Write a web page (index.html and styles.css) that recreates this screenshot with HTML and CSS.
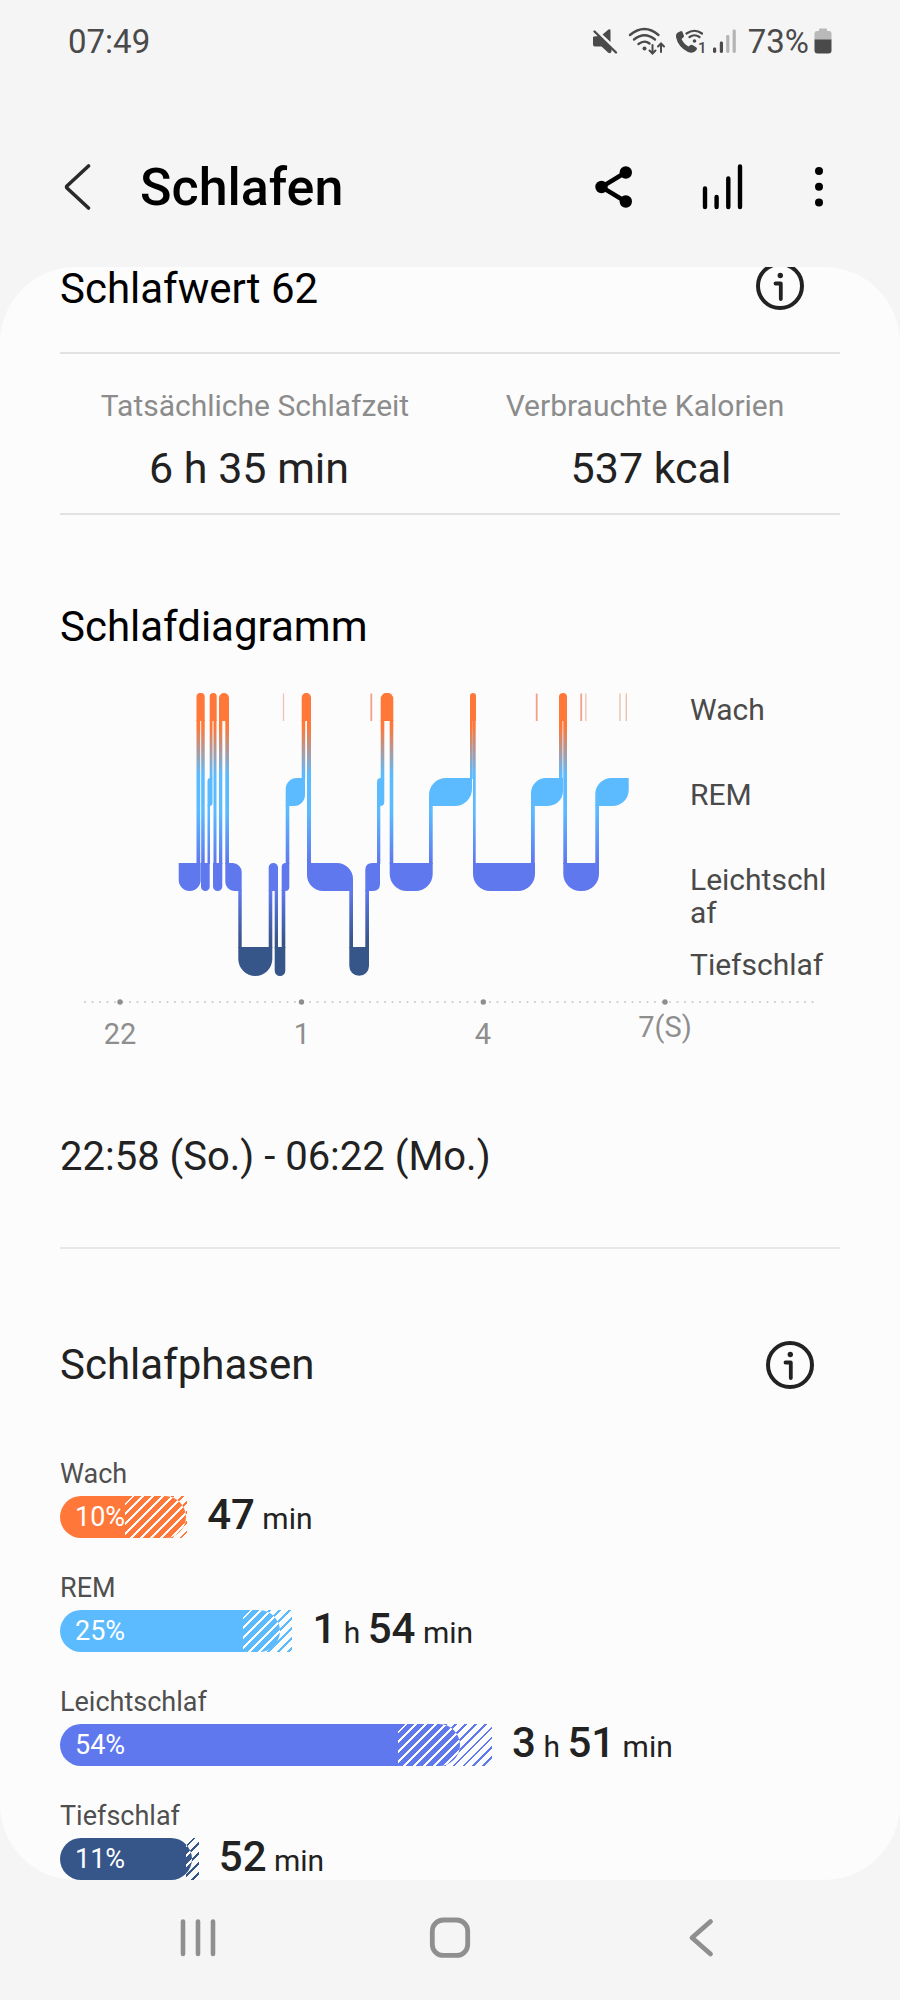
FILE: index.html
```html
<!DOCTYPE html>
<html lang="de">
<head>
<meta charset="utf-8">
<meta name="viewport" content="width=device-width, initial-scale=1">
<title>Schlafen</title>
<link rel="stylesheet" href="styles.css">
</head>
<body>
<div class="status">
  <span class="status-time">07:49</span>
  <div class="status-right">
    <svg class="status-icons" viewBox="590 21 150 40" aria-hidden="true">
      <g fill="#4a4a4a">
        <path d="M594 37.500Q594 36.500 595 36.500L600 36L612.500 48.500V51.500Q611.500 54.500 609 52.500L602.500 46.500H596Q594 46.500 594 44.500ZM603.500 34.500L609.500 29.500Q611.500 28.500 611.500 30.500V42Z"/>
        <circle cx="645.500" cy="48.500" r="2"/>
        <circle cx="695.500" cy="41" r="1.800"/>
        <path d="M678 33L682 31Q683 31 683.500 32L685 36Q685 37 684 37.800L682.500 39Q684.500 43.500 689.500 46.500L691.500 45Q692.500 44.500 693.500 45L697.500 47.500Q698.500 48.500 697.500 50Q694.500 54 689 52Q679 47 677 37Q676.800 34.500 678 33Z"/>
        <rect x="714" y="47.500" width="3.200" height="5.500" rx="1.400"/>
        <rect x="720.800" y="41.500" width="3.200" height="11.500" rx="1.400"/>
      </g>
      <g fill="#b4b4b4">
        <rect x="727.200" y="35" width="3.200" height="18" rx="1.400"/>
        <rect x="733.600" y="29.500" width="3.200" height="23.500" rx="1.400"/>
      </g>
      <g fill="none" stroke="#4a4a4a" stroke-width="2.400" stroke-linecap="round">
        <path d="M595.500 31.500L617 52.500"/>
        <path d="M631 35Q645.500 23 659.500 35M635 39.500Q645.500 31 656 39.500M639.500 44Q645.500 39.500 650.500 43.500"/>
        <path d="M653.500 45V53M650.500 50.500L653.500 53.500L656.500 50.500M662 52V44M659 46.500L662 43.500L665 46.500" stroke-width="2"/>
        <path d="M687.500 33.500Q695.500 28 703 33.500M690.500 37Q695.500 33.500 700.500 37" stroke-width="2.200"/>
      </g>
      <text class="sim" x="699" y="52.500">1</text>
    </svg>
    <span class="status-battery">73%</span>
    <svg class="battery" viewBox="0 0 18 26" aria-hidden="true">
      <path d="M5 1.500Q5 .5 6 .5H12Q13 .5 13 1.500V3H15Q17.500 3 17.500 5.500V12H.5V5.500Q.5 3 3 3H5Z" fill="#b9b9b9"/>
      <path d="M.5 11.500H17.500V22.500Q17.500 25.500 14.500 25.500H3.500Q.5 25.500 .5 22.500Z" fill="#4a4a4a"/>
    </svg>
  </div>
</div>

<header class="appbar">
  <button class="icon-button back" aria-label="Zurück">
    <svg viewBox="0 0 48 48" class="icon"><path d="M28.500 2L7.500 21.500Q5.500 23 7.500 24.500L28.500 44" fill="none" stroke="#2a2a2a" stroke-width="3.600" stroke-linecap="round" stroke-linejoin="round"/></svg>
  </button>
  <h1 class="title">Schlafen</h1>
  <button class="icon-button" aria-label="Teilen">
    <svg viewBox="0 0 61 48" class="icon icon-share"><path d="M35.500 8.500L11.500 23L35.500 37.500" fill="none" stroke="#000" stroke-width="4.400"/><circle cx="11.500" cy="23" r="6.200"/><circle cx="35.800" cy="8.500" r="6.200"/><circle cx="35.800" cy="37.500" r="6.200"/></svg>
  </button>
  <button class="icon-button" aria-label="Statistik">
    <svg viewBox="0 0 48 48" class="icon"><path d="M6 24.500V43M17.600 33V43M29.300 14.500V43M41 2.500V43" stroke="#000" stroke-width="4.400" stroke-linecap="round"/></svg>
  </button>
  <button class="icon-button" aria-label="Mehr Optionen">
    <svg viewBox="0 0 48 48" class="icon"><circle cx="24" cy="7" r="4"/><circle cx="24" cy="22.700" r="4"/><circle cx="24" cy="38.400" r="4"/></svg>
  </button>
</header>

<main class="card">
  <section>
    <div class="score-head">
      <h2 class="heading">Schlafwert 62</h2>
      <button class="icon-button" aria-label="Info zum Schlafwert">
        <svg viewBox="0 0 48 48" class="icon"><circle cx="24" cy="24" r="22" fill="none" stroke="#222" stroke-width="4"/><circle cx="24.300" cy="13.500" r="2.700" fill="#222"/><path d="M19.500 21.500H24.800V37" fill="none" stroke="#222" stroke-width="3.800" stroke-linecap="round" stroke-linejoin="round"/></svg>
      </button>
    </div>
    <div class="stats">
      <div class="stats-labels"><span>Tatsächliche Schlafzeit</span><span>Verbrauchte Kalorien</span></div>
      <div class="stats-values"><span>6 h 35 min</span><span>537 kcal</span></div>
    </div>
  </section>

  <section class="diagram">
    <h2 class="heading">Schlafdiagramm</h2>
    <div class="chart">
      <svg class="plot" viewBox="60 693 620 283" role="img" aria-label="Schlafphasen im Verlauf der Nacht">
        <defs>
          <linearGradient id="depth" gradientUnits="userSpaceOnUse" x1="0" y1="693" x2="0" y2="976">
            <stop offset="0" stop-color="#ff783a"/>
            <stop offset=".12" stop-color="#ff783a"/>
            <stop offset=".29" stop-color="#5cbbff"/>
            <stop offset=".42" stop-color="#5cbbff"/>
            <stop offset=".6" stop-color="#5f78ee"/>
            <stop offset=".7" stop-color="#5f78ee"/>
            <stop offset=".88" stop-color="#365589"/>
            <stop offset="1" stop-color="#365589"/>
          </linearGradient>
        </defs>
        <g fill="url(#depth)">
          <!-- Wach -->
          <path d="M196.500 721V697a4.100 4.100 0 0 1 8.200 0V721ZM209.700 721V696.500a3.500 3.500 0 0 1 7 0V721ZM219 721V698a5 5 0 0 1 10 0V721ZM301.700 721V697.500a4.650 4.650 0 0 1 9.300 0V721ZM380.700 721V699a6.300 6.300 0 0 1 12.600 0V721ZM470 721V696a3 3 0 0 1 6 0V721ZM559 721V697a4 4 0 0 1 8 0V721Z"/>
          <!-- REM -->
          <path d="M207.500 806V781q0-3 3-3H212.500V803q0 3-3 3ZM285.700 806V789a11 11 0 0 1 11-11H305V795a11 11 0 0 1-11 11ZM377 806V782q0-4 4-4H384.300V802q0 4-4 4ZM429 806V795a17 17 0 0 1 17-17H472V789a17 17 0 0 1-17 17ZM531 806V793a15 15 0 0 1 15-15H563V791a15 15 0 0 1-15 15ZM595.300 806V794a16 16 0 0 1 16-16H628.700V790a16 16 0 0 1-16 16Z"/>
          <!-- Leichtschlaf -->
          <path d="M178.700 863H200.700V880a11 11 0 0 1-22 0ZM201 863H209.700V886.700a4.350 4.350 0 0 1-8.700 0ZM213 863H222.300V886.400a4.650 4.650 0 0 1-9.300 0ZM225.300 863H232.700a9 9 0 0 1 9 9V891H234.300a9 9 0 0 1-9-9ZM268.700 891V867.600a4.650 4.650 0 0 1 9.300 0V891ZM281.700 891V867q0-4 4-4H289.300V887q0 4-4 4ZM307 863H337a16 16 0 0 1 16 16V891H323a16 16 0 0 1-16-16ZM365.300 891V870q0-7 7-7H380V884q0 7-7 7ZM389.700 863H432.700V874a17 17 0 0 1-17 17H406.700a17 17 0 0 1-17-17ZM473 863H535V874a17 17 0 0 1-17 17H490a17 17 0 0 1-17-17ZM563.300 863H599V874a17 17 0 0 1-17 17H580.300a17 17 0 0 1-17-17Z"/>
          <!-- Tiefschlaf -->
          <path d="M238.300 947H272.300V959a17 17 0 0 1-34 0ZM274.700 947H285.300V970.700a5.300 5.300 0 0 1-10.600 0ZM349.300 947H369V966a9.850 9.850 0 0 1-19.700 0Z"/>
          <!-- Übergänge -->
          <path d="M196.500 720h3.700V864h-3.700ZM201.200 720h3.500V864h-3.500ZM207.500 805h2.500V864h-2.500ZM209.700 720h2.800V779h-2.800ZM213.500 720h3V864h-3ZM219 720h3.300V864h-3.300ZM225.300 720h3.700V864h-3.700ZM238.300 890h3.400V948h-3.400ZM268.700 890h3.600V948h-3.600ZM274.700 890h3.300V948h-3.300ZM281.700 890h3.600V948h-3.600ZM285.700 805h3.600V864h-3.600ZM301.700 720h3.500V779h-3.500ZM307 720h4V864h-4ZM349.300 890h3.700V948h-3.700ZM365.300 890h3.700V948h-3.700ZM377 805h3.300V864h-3.300ZM380.700 720h3.600V779h-3.600ZM389.700 720h3.600V864h-3.600ZM429 805h3.700V864h-3.700ZM470 720h2.800V779h-2.800ZM473 720h2.700V864h-2.700ZM531 805h3.800V864h-3.800ZM559 720h3.500V779h-3.500ZM563.300 720h3.700V864h-3.700ZM595.300 805h3.700V864h-3.700Z"/>
        </g>
        <g stroke-width="1.300" stroke="#f2c0b4">
          <path d="M283.500 693.500V721M585.800 693.500V721"/>
          <path d="M371.300 693.500V721M536.700 693.500V721M581.200 693.500V721" stroke="#f3a08a" stroke-width="1.800"/>
          <path d="M620 693.500V721M626.300 693.500V721" stroke="#e8bfa4"/>
        </g>
      </svg>
      <ul class="stage-names">
        <li>Wach</li>
        <li>REM</li>
        <li>Leichtschlaf</li>
        <li>Tiefschlaf</li>
      </ul>
      <svg class="axis" viewBox="60 976 780 80">
        <path d="M85 1002H814" stroke="#cdcdcd" stroke-width="2.200" stroke-linecap="round" stroke-dasharray="0 7.500"/>
        <g fill="#8e8e8e"><circle cx="120" cy="1002" r="2.700"/><circle cx="301.500" cy="1002" r="2.700"/><circle cx="483.300" cy="1002" r="2.700"/><circle cx="665" cy="1002" r="2.700"/></g>
        <text x="120" y="1044">22</text>
        <text x="302" y="1044">1</text>
        <text x="483" y="1044">4</text>
        <text x="665" y="1037">7(S)</text>
      </svg>
    </div>
    <p class="range">22:58 (So.) - 06:22 (Mo.)</p>
  </section>

  <section class="phases">
    <div class="phases-head">
      <h2 class="heading">Schlafphasen</h2>
      <button class="icon-button" aria-label="Info zu Schlafphasen">
        <svg viewBox="0 0 48 48" class="icon"><circle cx="24" cy="24" r="22" fill="none" stroke="#222" stroke-width="4"/><circle cx="24.300" cy="13.500" r="2.700" fill="#222"/><path d="M19.500 21.500H24.800V37" fill="none" stroke="#222" stroke-width="3.800" stroke-linecap="round" stroke-linejoin="round"/></svg>
      </button>
    </div>
    <ul class="phase-list">
      <li class="phase awake">
        <span class="phase-name">Wach</span>
        <div class="phase-row">
          <div class="bar" style="width:16.3%"><i class="typical" style="width:48.8%"></i><div class="fill" style="width:99.500%"><i class="typical-in" style="width:48.500%"></i><span class="percent">10%</span></div></div>
          <span class="duration"><b>47</b> min</span>
        </div>
      </li>
      <li class="phase rem">
        <span class="phase-name">REM</span>
        <div class="phase-row">
          <div class="bar" style="width:29.8%"><i class="typical" style="width:21.6%"></i><div class="fill" style="width:94.8%"><i class="typical-in" style="width:17%"></i><span class="percent">25%</span></div></div>
          <span class="duration"><b>1</b> h <b>54</b> min</span>
        </div>
      </li>
      <li class="phase light">
        <span class="phase-name">Leichtschlaf</span>
        <div class="phase-row">
          <div class="bar" style="width:55.4%"><i class="typical" style="width:21.8%"></i><div class="fill" style="width:92.6%"><i class="typical-in" style="width:15.6%"></i><span class="percent">54%</span></div></div>
          <span class="duration"><b>3</b> h <b>51</b> min</span>
        </div>
      </li>
      <li class="phase deep">
        <span class="phase-name">Tiefschlaf</span>
        <div class="phase-row">
          <div class="bar" style="width:17.8%"><i class="typical" style="width:9.4%"></i><div class="fill" style="width:95%"><i class="typical-in" style="width:4.600%"></i><span class="percent">11%</span></div></div>
          <span class="duration"><b>52</b> min</span>
        </div>
      </li>
    </ul>
  </section>
</main>

<nav class="navbar">
  <button class="icon-button" aria-label="Letzte Apps"><svg viewBox="0 0 48 48" class="icon"><path d="M9 7.500V40M24 7.500V40M39 7.500V40" stroke="#8f8f8f" stroke-width="4.600" stroke-linecap="round"/></svg></button>
  <button class="icon-button" aria-label="Startseite"><svg viewBox="0 0 48 48" class="icon"><rect x="6.300" y="6" width="35.400" height="35.400" rx="11" fill="none" stroke="#8f8f8f" stroke-width="4.800"/></svg></button>
  <button class="icon-button" aria-label="Zurück"><svg viewBox="0 0 48 48" class="icon"><path d="M32.500 7.500L14 23.700L32.500 40" fill="none" stroke="#8f8f8f" stroke-width="4.800" stroke-linecap="round" stroke-linejoin="round"/></svg></button>
</nav>
</body>
</html>
```
FILE: styles.css
```css
* { box-sizing: border-box; }

body {
  margin: 0;
  background: #f5f5f5;
  color: #222;
  font-family: Roboto, "Noto Sans", sans-serif;
}

h1, h2, p, ul { margin: 0; padding: 0; }
ul { list-style: none; }
svg { display: block; }

.icon-button {
  flex: none;
  padding: 0;
  border: 0;
  background: none;
}
.icon { width: 48px; height: 48px; }
.icon-share { width: 61px; }

.status {
  display: flex;
  align-items: center;
  justify-content: space-between;
  height: 82px;
  padding: 0 68px;
  color: #4a4a4a;
  font-size: 33px;
}
.status-right { display: flex; align-items: center; }
.status-icons { width: 150px; height: 40px; }
.sim { fill: #4a4a4a; font-size: 15px; font-weight: 500; }
.status-battery { margin: 0 5px 0 9px; }
.battery { width: 18px; height: 26px; }

.appbar {
  display: flex;
  align-items: center;
  gap: 48px;
  height: 185px;
  padding: 27px 57px 0 60px;
}
.back { margin-right: -16px; }
.title {
  flex: 1;
  color: #000;
  font-size: 52px;
  line-height: 62px;
  font-weight: 500;
}

.card {
  overflow: hidden;
  padding: 0 60px;
  border-radius: 76px;
  background: #fcfcfc;
}
.heading {
  color: #000;
  font-size: 42px;
  line-height: 44px;
  font-weight: 400;
}
.score-head, .phases-head {
  display: flex;
  align-items: center;
  justify-content: space-between;
}
.score-head { height: 38px; padding-right: 36px; }
.score-head .heading { align-self: flex-start; }
.phases-head { height: 50px; padding-right: 26px; }
.phases .heading { color: #222; }

.stats {
  margin-top: 47px;
  padding: 35px 0 20px;
  border-top: 2px solid #e2e2e2;
  border-bottom: 2px solid #e2e2e2;
  text-align: center;
}
.stats-labels, .stats-values {
  display: grid;
  grid-template-columns: 1fr 1fr;
}
.stats-labels { color: #8c8c8c; font-size: 30px; line-height: 34px; }
.stats-values {
  column-gap: 24px;
  margin-top: 20px;
  font-size: 43px;
  line-height: 50px;
}

.diagram {
  padding: 90px 0 66px;
  border-bottom: 2px solid #e8e8e8;
}
.chart {
  display: grid;
  grid-template-columns: 620fr 160fr;
  margin-top: 44px;
}
.plot, .axis { width: 100%; height: auto; }
.stage-names {
  display: grid;
  grid-template-rows: repeat(3, 85px);
  height: 0;
  padding: 0 10px;
  color: #4a4a4a;
  font-size: 30px;
  line-height: 33px;
  word-break: break-all;
}
.axis { grid-column: 1 / -1; }
.axis text { fill: #8e8e8e; font-size: 29px; text-anchor: middle; }
.range { margin-top: 77px; font-size: 40px; line-height: 48px; }

.phases { padding-top: 91px; }
.phase-list {
  display: grid;
  gap: 34px;
  margin-top: 68px;
}
.phase-name {
  display: block;
  margin-bottom: 6px;
  color: #4f4f4f;
  font-size: 27px;
  line-height: 32px;
}
.phase-row { display: flex; align-items: center; gap: 20px; height: 42px; }
.bar { position: relative; flex: none; height: 42px; }
.fill {
  position: relative;
  display: flex;
  align-items: center;
  overflow: hidden;
  height: 42px;
  padding-left: 15px;
  border-radius: 21px;
  background: var(--tone);
}
.percent { position: relative; color: #fff; font-size: 27px; line-height: 42px; }

/* Hatched band: typical range for the age group */
.typical, .typical-in {
  position: absolute;
  top: 0;
  right: 0;
  bottom: 0;
}
.typical { background: repeating-linear-gradient(135deg, #fcfcfc 0 5px, var(--tone) 5px 7px); }
.typical-in { background: repeating-linear-gradient(135deg, transparent 0 5px, #fcfcfc 5px 7px); }

.duration { font-size: 30px; line-height: 38px; white-space: nowrap; }
.duration b { font-size: 42px; font-weight: 500; }

.awake { --tone: #ff783a; }
.rem { --tone: #5cbbff; }
.light { --tone: #5f78ee; }
.deep { --tone: #365589; }

.navbar {
  display: flex;
  align-items: center;
  justify-content: space-around;
  height: 120px;
  padding: 0 72px 4px;
}
```
